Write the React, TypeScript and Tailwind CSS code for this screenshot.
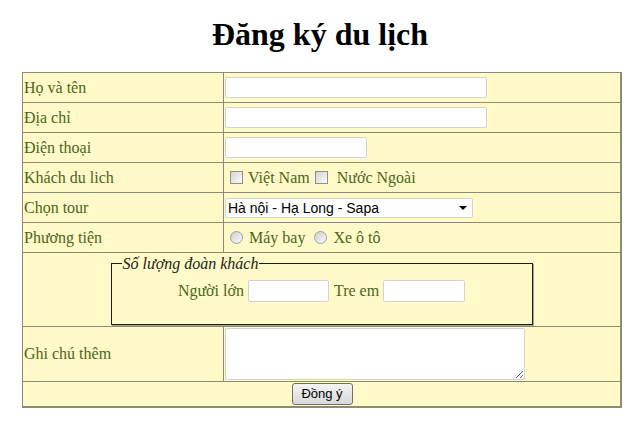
import type { ReactNode } from 'react'

const serif = { fontFamily: '"Liberation Serif", "Times New Roman", serif' }

function Row({ label, children, h = 'h-[30px]' }: { label: ReactNode; children: ReactNode; h?: string }) {
  return (
    <tr className={h}>
      <td className="w-[201px] border border-[#8c8b74] pl-[1px] align-middle">{label}</td>
      <td className="border border-[#8c8b74] p-[1px] align-middle">{children}</td>
    </tr>
  )
}

function TextBox({ w }: { w: string }) {
  return (
    <input
      type="text"
      className={`${w} block h-[21px] rounded-[2px] border border-[#d3d3cf] bg-white outline-none`}
    />
  )
}

function Check() {
  return (
    <input
      type="checkbox"
      className="ml-[5px] mr-[5px] inline-block h-[13px] w-[13px] appearance-none border border-[#8f8f8f] bg-gradient-to-br from-[#d4d4d4] to-[#fbfbfb] align-[-1px]"
    />
  )
}

function Radio() {
  return (
    <input
      type="radio"
      name="pt"
      className="ml-[5px] mr-[6px] inline-block h-[13px] w-[13px] appearance-none rounded-full border border-[#a0a0a0] bg-gradient-to-br from-[#cfcfcf] to-[#fbfbfb] align-[-1px]"
    />
  )
}

export default function App() {
  return (
    <div className="min-h-[433px] w-[631px] bg-white" style={serif}>
      <h1 className="pl-[9px] pt-[16px] text-center text-[32px] font-bold leading-[37px] text-black">Đăng ký du lịch</h1>

      <table className="ml-[22px] mt-[19px] w-[600px] border-collapse border-b-2 border-l border-r-2 border-t border-[#8c8b74] bg-[#fffac8] text-[16px] text-[#4b661c]">
        <tbody>
          <Row label="Họ và tên">
            <TextBox w="w-[262px]" />
          </Row>
          <Row label="Địa chỉ">
            <TextBox w="w-[262px]" />
          </Row>
          <Row label="Điện thoại">
            <TextBox w="w-[142px]" />
          </Row>
          <Row label="Khách du lich">
            <Check />Việt Nam<Check /> Nước Ngoài
          </Row>
          <Row label="Chọn tour">
            <div className="relative w-[248px]">
              <select
                className="block h-[20px] w-[248px] appearance-none rounded-[2px] border border-[#d3d3cf] bg-white pl-[2px] text-[14px] leading-[18px] text-black outline-none"
                style={{ fontFamily: '"Liberation Sans", Arial, sans-serif' }}
              >
                <option>Hà nội - Hạ Long - Sapa</option>
              </select>
              <span className="pointer-events-none absolute right-[6px] top-[8px] h-0 w-0 border-l-[4px] border-r-[4px] border-t-[4px] border-l-transparent border-r-transparent border-t-black" />
            </div>
          </Row>
          <Row label="Phương tiện">
            <Radio />Máy bay <Radio />Xe ô tô
          </Row>
          <tr className="h-[74px]">
            <td colSpan={2} className="border border-[#8c8b74] p-[1px] align-middle">
              <fieldset className="mx-auto w-[422px] border border-[#1c1c1c] px-[10px] pb-[21px] pt-[6px] shadow-[1px_1px_0_#a8a690]">
                <legend className="px-[1px] text-[16px] italic leading-[18px] text-[#1c1c1c]">Số lượng đoàn khách</legend>
                <div className="flex items-center justify-center">
                  <span>Người lớn</span>
                  <input type="text" className="ml-[4px] h-[22px] w-[81px] rounded-[2px] border border-[#d3d3cf] bg-white outline-none" />
                  <span className="ml-[5px]">Tre em</span>
                  <input type="text" className="ml-[4px] h-[22px] w-[82px] rounded-[2px] border border-[#d3d3cf] bg-white outline-none" />
                </div>
              </fieldset>
            </td>
          </tr>
          <Row label="Ghi chú thêm" h="h-[55px]">
            <textarea className="block h-[52px] w-[300px] resize rounded-[2px] border border-[#d3d3cf] bg-white outline-none" />
          </Row>
          <tr className="h-[25px]">
            <td colSpan={2} className="border border-[#8c8b74] p-0 pl-[1px] text-center align-middle">
              <button
                type="button"
                className="block mx-auto h-[22px] w-[61px] rounded-[3px] border border-[#707070] bg-gradient-to-b from-[#f4f4f4] to-[#d9d9d9] text-[13px] leading-[18px] text-black"
                style={{ fontFamily: '"Liberation Sans", Arial, sans-serif' }}
              >
                Đồng ý
              </button>
            </td>
          </tr>
        </tbody>
      </table>
    </div>
  )
}
